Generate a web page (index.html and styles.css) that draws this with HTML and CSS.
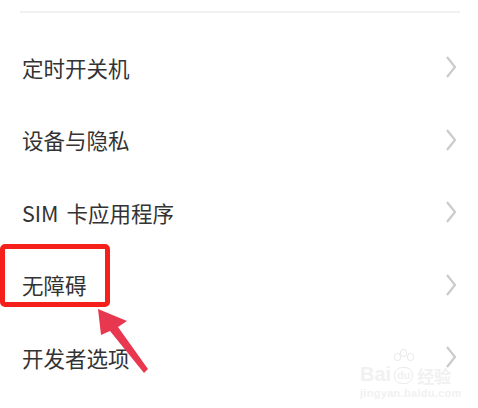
FILE: index.html
```html
<!DOCTYPE html>
<html lang="zh-CN">
<head>
    <meta charset="UTF-8">
    <title>设置</title>
    <link rel="stylesheet" href="styles.css">
</head>
<body>
    <div class="screen">
        <div class="divider"></div>
        <ul class="menu">
            <li class="menu-item">
                <span>定时开关机</span>
                <svg class="chevron" width="12" height="24" viewBox="0 0 12 24"><polyline points="2,2 10,12 2,22"/></svg>
            </li>
            <li class="menu-item">
                <span>设备与隐私</span>
                <svg class="chevron" width="12" height="24" viewBox="0 0 12 24"><polyline points="2,2 10,12 2,22"/></svg>
            </li>
            <li class="menu-item">
                <span class="latin">SIM 卡应用程序</span>
                <svg class="chevron" width="12" height="24" viewBox="0 0 12 24"><polyline points="2,2 10,12 2,22"/></svg>
            </li>
            <li class="menu-item">
                <span>无障碍</span>
                <svg class="chevron" width="12" height="24" viewBox="0 0 12 24"><polyline points="2,2 10,12 2,22"/></svg>
                <div class="mark-box"></div>
            </li>
            <li class="menu-item">
                <span>开发者选项</span>
                <svg class="chevron" width="12" height="24" viewBox="0 0 12 24"><polyline points="2,2 10,12 2,22"/></svg>
            </li>
        </ul>

        <!-- annotation arrow pointing at the box -->
        <svg class="arrow" width="478" height="408" viewBox="0 0 478 408">
            <polygon points="98,309 127,321 118,327 148,369 144,373 110,331 101,335" fill="#e8384f"/>
        </svg>

        <div class="watermark">
            <div class="wm-logo">
                <span>Bai</span>
                <span class="wm-paw">
                    <i class="toe t1"></i><i class="toe t2"></i><i class="toe t3"></i>
                    <b>du</b>
                </span>
                <span class="wm-cn">经验</span>
            </div>
            <div class="wm-url">jingyan.baidu.com</div>
        </div>
    </div>
</body>
</html>
```

FILE: styles.css
```css
body {
    margin: 0;
    background-color: #fff;
    font-family: "Noto Sans CJK SC", "Noto Sans", sans-serif;
    color: #333;
}

.screen {
    position: relative;
    width: 478px;
    height: 408px;
    overflow: hidden;
}

.divider {
    margin: 11px 18px 0 20px;
    height: 2px;
    background-color: #f1f1f1;
}

.menu {
    list-style: none;
    margin: 18px 0 0;
    padding: 0;
}

.menu-item {
    position: relative;
    display: flex;
    align-items: center;
    justify-content: space-between;
    height: 72.5px;
    padding: 0 21px 0 22px;
    font-size: 21.5px;
    line-height: 1;
}

.latin {
    word-spacing: 3px;
}

.chevron {
    fill: none;
    stroke: #cbcbcb;
    stroke-width: 2.2;
}

.mark-box {
    position: absolute;
    left: 0;
    top: -5px;
    width: 100px;
    height: 53px;
    border: 5px solid #f5201b;
    border-radius: 5px;
}

.arrow {
    position: absolute;
    left: 0;
    top: 0;
}

.watermark {
    position: absolute;
    left: 360px;
    top: 352px;
    color: #f1f1f1;
    font-family: "Liberation Sans", sans-serif;
    font-weight: bold;
}

.wm-logo {
    display: flex;
    align-items: flex-end;
    font-size: 20px;
    line-height: 1;
    height: 32px;
}

.wm-paw {
    position: relative;
    margin: 0 4px 0 3px;
}

.wm-paw b {
    display: inline-block;
    width: 17px;
    height: 15px;
    border-radius: 8px;
    border: 1px solid #ebebeb;
    font-size: 11px;
    line-height: 15px;
    text-align: center;
}

.toe {
    position: absolute;
    width: 5px;
    height: 6px;
    border: 1px solid #ebebeb;
    border-radius: 50%;
}

.t1 { left: 0; top: -9px; }
.t2 { left: 6px; top: -13px; }
.t3 { left: 13px; top: -9px; }

.wm-cn {
    font-family: "Noto Sans CJK SC", sans-serif;
    font-size: 17px;
}

.wm-url {
    margin-top: 3px;
    font-size: 11px;
    letter-spacing: 0.3px;
}
```
